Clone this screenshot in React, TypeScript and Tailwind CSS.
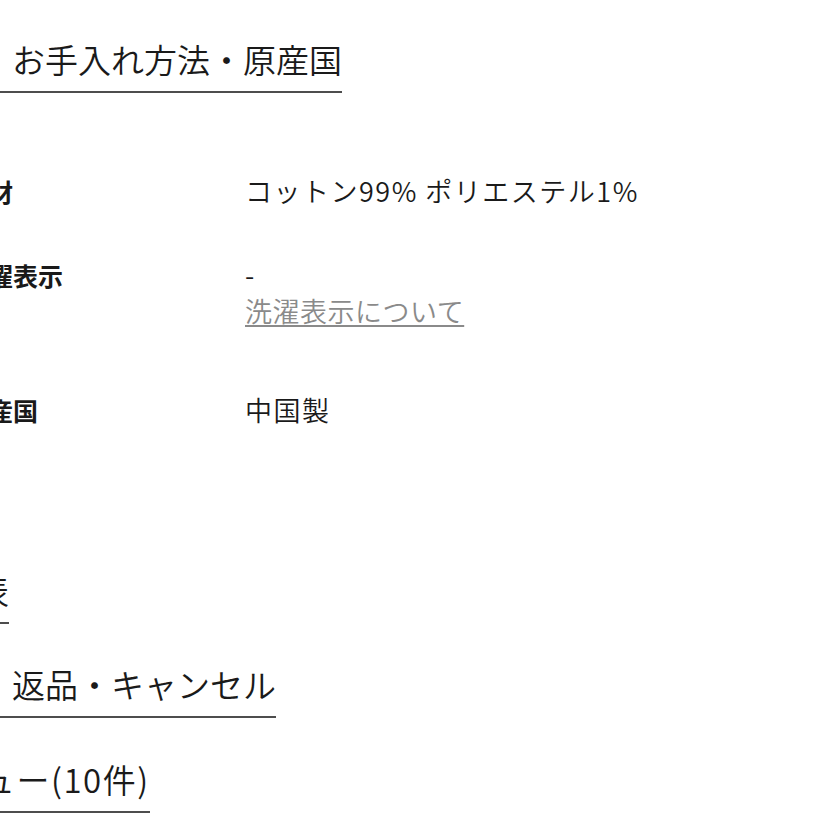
import React from 'react';

// Product detail section (mobile page, scrolled sideways)
type Spec = {
  label: string;
  values: string[];
  link?: string;
};

const specs: Spec[] = [
  { label: '素材', values: ['コットン99% ポリエステル1%'] },
  { label: '洗濯表示', values: ['-'], link: '洗濯表示について' },
  { label: '原産国', values: ['中国製'] },
];

function SectionHeading({ title, className = '' }: { title: string; className?: string }) {
  return (
    <div className={className}>
      <h2 className="inline-block border-b-2 border-[#4d4d4d] pb-[10px] text-[33px] font-[350] leading-[44px] text-[#1a1a1a] whitespace-nowrap">
        {title}
      </h2>
    </div>
  );
}

export default function App() {
  return (
    <div
      className="h-[816px] w-[816px] overflow-hidden bg-white"
      style={{ fontFamily: '"Noto Sans CJK JP", "Noto Sans", sans-serif' }}
    >
      <div className="ml-[-87px] pt-[37px]">
        <SectionHeading title="素材・お手入れ方法・原産国" />

        {/* Spec table */}
        <div className="mt-[80px] flex flex-col pl-[50px]">
          {specs.map((spec, i) => (
            <div
              key={spec.label}
              className={`grid grid-cols-[282px_1fr] ${i === 1 ? 'mt-[48px]' : i === 2 ? 'mt-[63px]' : ''}`}
            >
              <div className="text-[25px] font-bold leading-[36px] text-[#1a1a1a] whitespace-nowrap">
                {spec.label}
              </div>
              <div className="text-[27px] font-[350] leading-[36px] tracking-[1.5px] text-[#1a1a1a]">
                {spec.values.map(v => (
                  <p key={v} className="whitespace-nowrap">{v}</p>
                ))}
                {spec.link && (
                  <a href="#" className="block whitespace-nowrap tracking-[0.5px] text-[#8a8a8a] underline underline-offset-[3px]">
                    {spec.link}
                  </a>
                )}
              </div>
            </div>
          ))}
        </div>

        <SectionHeading title="サイズ表" className="mt-[140px] ml-[-35px]" />
        <SectionHeading title="配送・返品・キャンセル" className="mt-[38px]" />
        <SectionHeading title="レビュー(10件)" className="mt-[39px] tracking-[1.5px]" />
      </div>
    </div>
  );
}
